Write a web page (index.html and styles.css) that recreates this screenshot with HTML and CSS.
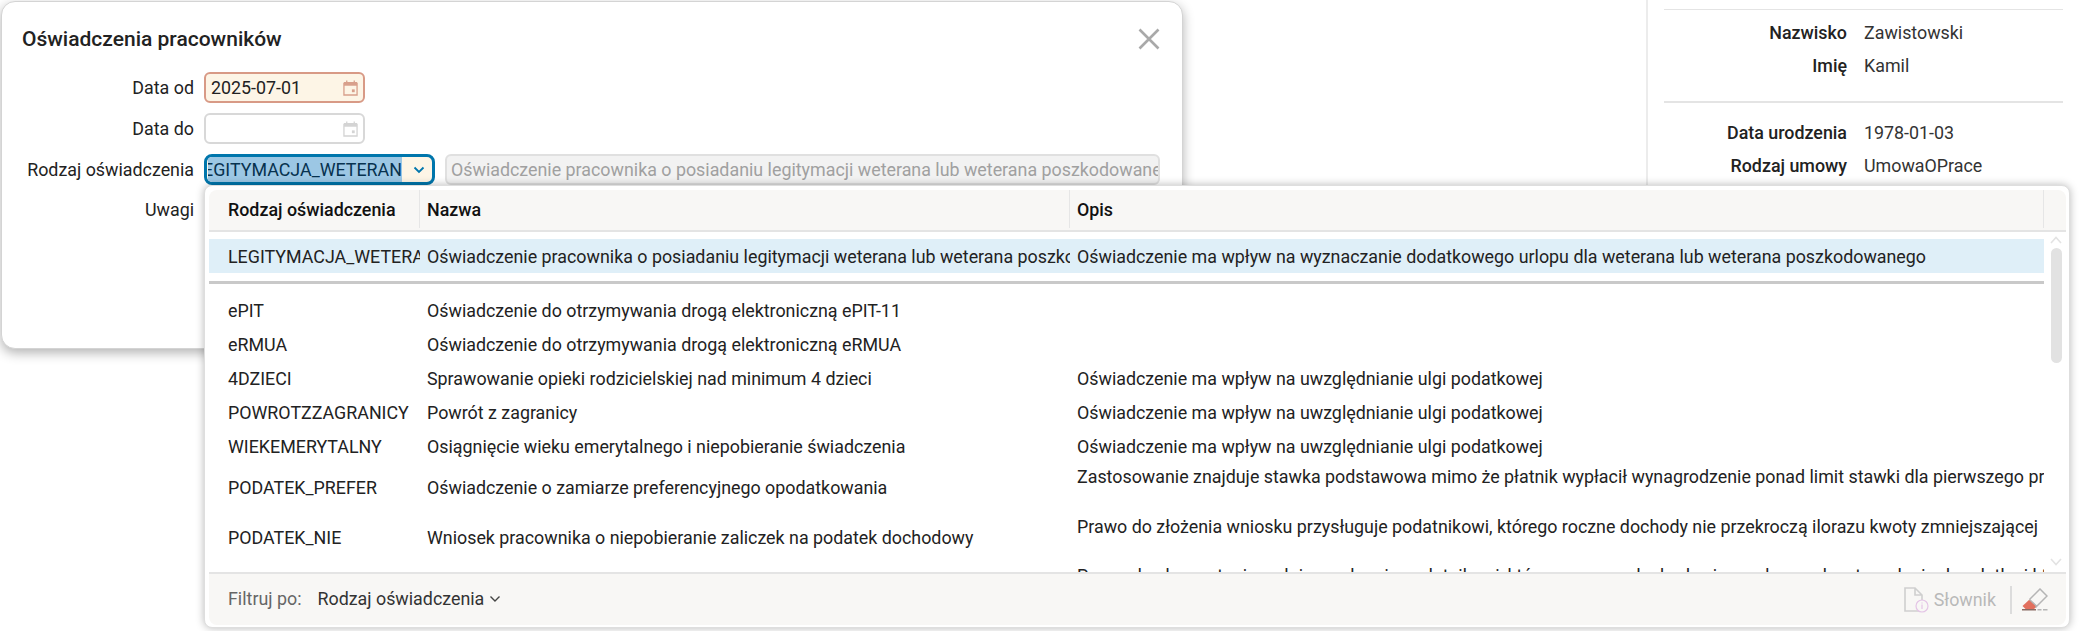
FILE: index.html
```html
<!DOCTYPE html>
<html lang="pl">
<head>
<meta charset="utf-8">
<title>Oświadczenia pracowników</title>
<link rel="stylesheet" href="styles.css">
</head>
<body>
<div class="page">
  <aside class="side">
    <hr class="rule thin">
    <dl class="facts first">
      <dt>Nazwisko</dt><dd>Zawistowski</dd>
      <dt>Imię</dt><dd>Kamil</dd>
    </dl>
    <hr class="rule thick">
    <dl class="facts second">
      <dt>Data urodzenia</dt><dd>1978-01-03</dd>
      <dt>Rodzaj umowy</dt><dd>UmowaOPrace</dd>
    </dl>
  </aside>

  <section class="modal">
    <header class="modal-head">
      <h1>Oświadczenia pracowników</h1>
      <svg class="close" viewBox="0 0 22 22" width="22" height="22"><path d="M1.500 1.500 20.500 20.500M20.500 1.500 1.500 20.500"/></svg>
    </header>
    <div class="form">
      <label>Data od</label>
      <div class="field date required">
        <span>2025-07-01</span>
        <svg viewBox="0 0 16 18" width="15" height="17"><path class="cal" d="M1 4.500h14v12.500H1zM4 1.500v3M12 1.500v3"/><path class="calfill" d="M1 3h14v4H1z"/><rect class="calfill" x="9.500" y="11" width="3" height="3"/></svg>
      </div>
      <label>Data do</label>
      <div class="field date empty">
        <span></span>
        <svg viewBox="0 0 16 18" width="15" height="17"><path class="cal" d="M1 4.500h14v12.500H1zM4 1.500v3M12 1.500v3"/><path class="calfill" d="M1 3h14v4H1z"/><rect class="calfill" x="9.500" y="11" width="3" height="3"/></svg>
      </div>
      <label>Rodzaj oświadczenia</label>
      <div class="kind">
        <div class="field combo">
          <div class="combo-text"><span class="selected">LEGITYMACJA_WETERAN</span></div>
          <svg viewBox="0 0 12 8" width="12" height="8"><path d="M1.500 1.500 6 6l4.500-4.500"/></svg>
        </div>
        <div class="field readonly"><span>Oświadczenie pracownika o posiadaniu legitymacji weterana lub weterana poszkodowanego</span></div>
      </div>
      <label class="notes">Uwagi</label>
    </div>
  </section>

  <section class="dropdown">
    <div class="thead">
      <div class="c1">Rodzaj oświadczenia</div>
      <div class="c2">Nazwa</div>
      <div class="c3">Opis</div>
      <div class="c4"></div>
    </div>
    <div class="tbody">
      <div class="list">
        <div class="row current"><div class="c1">LEGITYMACJA_WETERANA</div><div class="c2">Oświadczenie pracownika o posiadaniu legitymacji weterana lub weterana poszkodowanego</div><div class="c3">Oświadczenie ma wpływ na wyznaczanie dodatkowego urlopu dla weterana lub weterana poszkodowanego</div></div>
        <div class="bar"></div>
        <div class="row"><div class="c1">ePIT</div><div class="c2">Oświadczenie do otrzymywania drogą elektroniczną ePIT-11</div><div class="c3"></div></div>
        <div class="row"><div class="c1">eRMUA</div><div class="c2">Oświadczenie do otrzymywania drogą elektroniczną eRMUA</div><div class="c3"></div></div>
        <div class="row"><div class="c1">4DZIECI</div><div class="c2">Sprawowanie opieki rodzicielskiej nad minimum 4 dzieci</div><div class="c3">Oświadczenie ma wpływ na uwzględnianie ulgi podatkowej</div></div>
        <div class="row"><div class="c1">POWROTZZAGRANICY</div><div class="c2">Powrót z zagranicy</div><div class="c3">Oświadczenie ma wpływ na uwzględnianie ulgi podatkowej</div></div>
        <div class="row"><div class="c1">WIEKEMERYTALNY</div><div class="c2">Osiągnięcie wieku emerytalnego i niepobieranie świadczenia</div><div class="c3">Oświadczenie ma wpływ na uwzględnianie ulgi podatkowej</div></div>
        <div class="row tall"><div class="c1">PODATEK_PREFER</div><div class="c2">Oświadczenie o zamiarze preferencyjnego opodatkowania</div><div class="c3">Zastosowanie znajduje stawka podstawowa mimo że płatnik wypłacił wynagrodzenie ponad limit stawki dla pierwszego progu</div></div>
        <div class="row tall"><div class="c1">PODATEK_NIE</div><div class="c2">Wniosek pracownika o niepobieranie zaliczek na podatek dochodowy</div><div class="c3">Prawo do złożenia wniosku przysługuje podatnikowi, którego roczne dochody nie przekroczą ilorazu kwoty zmniejszającej</div></div>
        <div class="row tall"><div class="c1"></div><div class="c2"></div><div class="c3">Prawo do skorzystania z ulgi przysługuje podatnikowi, którego roczne dochody nie przekroczą kwoty wolnej od podatku i który</div></div>
      </div>
      <div class="scroll">
        <svg viewBox="0 0 12 8" width="12" height="8"><path d="M1 7 6 1.500 11 7"/></svg>
        <div class="thumb"></div>
        <svg class="down" viewBox="0 0 12 8" width="12" height="8"><path d="M1 1 6 6.500 11 1"/></svg>
      </div>
    </div>
    <footer class="tfoot">
      <span class="filter-label">Filtruj po:</span>
      <span class="filter-value">Rodzaj oświadczenia</span>
      <svg class="filter-chev" viewBox="0 0 12 8" width="12" height="8"><path d="M1.500 1.500 6 6l4.500-4.500"/></svg>
      <div class="tools">
        <svg class="doc" viewBox="0 0 26 26" width="26" height="26">
          <path class="doc-page" d="M1 1h10l7 7v16H1zM11 1v7h7"/>
          <circle class="doc-info" cx="18" cy="19" r="6"/>
          <path class="doc-info" d="M18 17.500V22M18 15.500v1"/>
        </svg>
        <span class="dict">Słownik</span>
        <span class="sep"></span>
        <svg class="eraser" viewBox="0 0 27 23" width="27" height="23">
          <path class="er-tip" d="M8.500 11.500 16 18.500 13 21H4.500L1.500 18z"/>
          <path class="er-body" d="M8.500 11.500 19 1 26 8 14.500 19.500M8.500 11.500 16 18.500"/>
          <path class="er-line" d="M1 21.750H15"/>
          <path class="er-dash" d="M16.500 21.750h4M22 21.750h4.500"/>
        </svg>
      </div>
    </footer>
  </section>
</div>
</body>
</html>
```
FILE: styles.css
```css
* { box-sizing: border-box; }
html, body { margin: 0; padding: 0; background: #fff; }
body {
  width: 2079px;
  height: 631px;
  overflow: hidden;
  font-family: Roboto, "Liberation Sans", sans-serif;
  font-size: 17.850px;
  color: #222;
}
.page {
  position: relative;
  width: 2079px;
  height: 631px;
  display: flex;
  justify-content: flex-end;
}

/* background panel */
.side {
  width: 433px;
  height: 186px;
  border-left: 2px solid #ececec;
  padding: 9px 16px 0 16px;
  overflow: hidden;
}
.rule { border: 0; margin: 0; background: #e4e4e4; }
.rule.thin { height: 1px; }
.rule.thick { height: 2px; }
.facts {
  display: grid;
  grid-template-columns: 183px 1fr;
  column-gap: 17px;
  grid-auto-rows: 33px;
  align-items: center;
  margin: 0;
}
.facts.first { padding: 6px 0 19px; }
.facts.second { padding: 13px 0 0; }
.facts dt { text-align: right; font-weight: 500; }
.facts dd { margin: 0; color: #333; }

/* modal */
.modal {
  position: absolute;
  left: 1px;
  top: 1px;
  width: 1182px;
  height: 348px;
  background: #fff;
  border: 1px solid #d4d4d4;
  border-radius: 14px;
  box-shadow: 0 4px 12px rgba(0, 0, 0, .3);
  padding: 0 20px;
}
.modal-head {
  display: flex;
  align-items: center;
  justify-content: space-between;
  height: 70px;
  padding: 4px 2px 0 0;
}
.modal-head h1 { margin: 0; font-size: 21px; font-weight: 500; color: #222; }
.close path { fill: none; stroke: #a9a9a9; stroke-width: 2.600; }
.form {
  display: grid;
  grid-template-columns: 172px minmax(0, 1fr);
  column-gap: 10px;
  row-gap: 10px;
  grid-auto-rows: 31px;
  align-items: center;
}
.form label { text-align: right; }
.form label.notes { align-self: start; padding-top: 4px; }
.field {
  height: 31px;
  display: flex;
  align-items: center;
  border: 2px solid #d8d8d8;
  border-radius: 6px;
  background: #fff;
  overflow: hidden;
}
.date { width: 161px; justify-content: space-between; padding: 0 5px 0 5px; }
.date svg { flex: none; }
.cal { fill: none; stroke-width: 1.400; }
.required { background: #fdf5e6; border-color: #d89a86; }
.required .cal { stroke: #d8a08c; }
.required .calfill { fill: #d8a08c; }
.empty .cal { stroke: #d4d4d4; }
.empty .calfill { fill: #d4d4d4; }
.kind { display: flex; align-items: center; column-gap: 10px; margin-right: 2px; }
.combo {
  flex: none;
  width: 231px;
  border: 3px solid #0076ac;
  border-radius: 8px;
  background: #fdf5e6;
  padding: 0 7px 0 1px;
}
.combo-text {
  width: 196px;
  display: flex;
  justify-content: flex-end;
  overflow: hidden;
  white-space: nowrap;
}
.selected { flex: none; background: #9cc7e4; color: #07324f; line-height: 25px; }
.combo svg { margin-left: 11px; flex: none; }
.combo path { fill: none; stroke: #0076ac; stroke-width: 1.800; }
.readonly {
  flex: 1;
  min-width: 0;
  background: #f2f2f2;
  border-color: #e0e0e0;
  color: #a0a0a0;
  padding: 0 0 0 4px;
  white-space: nowrap;
}

/* dropdown menu */
.dropdown {
  position: absolute;
  left: 204px;
  top: 185px;
  width: 1866px;
  height: 443px;
  background: #fff;
  border: 1px solid #dedede;
  border-radius: 8px;
  box-shadow: 0 0 9px rgba(0, 0, 0, .28);
  padding: 4px 3px 2px 4px;
  display: flex;
  flex-direction: column;
  overflow: hidden;
}
.thead {
  flex: none;
  height: 42px;
  display: flex;
  background: #f8f7f5;
  border-bottom: 2px solid #e4e4e4;
  border-radius: 8px 8px 0 0;
  font-weight: 500;
  color: #111;
  padding-bottom: 2px;
}
.thead > div {
  display: flex;
  align-items: center;
  border-right: 1px solid #e6e6e6;
}
.c1, .c2, .c3 { flex: none; white-space: nowrap; overflow: hidden; }
.c1 { width: 211px; padding-left: 19px; }
.c2 { width: 650px; padding-left: 7px; }
.c3 { width: 974px; padding-left: 7px; }
.thead .c4 { flex: 1; border-right: 0; }
.tbody {
  flex: 1;
  min-height: 0;
  display: flex;
  overflow: hidden;
}
.list { flex: none; width: 1835px; padding-top: 7px; overflow: hidden; }
.row {
  display: flex;
  align-items: center;
  height: 34px;
}
.row.tall { height: 49.500px; }
.row.tall .c3 { align-self: flex-start; line-height: 20px; padding-top: 4px; }
.row.current { background: #dfeff8; }
.bar { height: 3px; margin: 8px 0 9px; background: #c9c9c9; }
.scroll {
  flex: 1;
  display: flex;
  flex-direction: column;
  align-items: center;
  padding: 4px 5px 0 6px;
}
.scroll svg { flex: none; }
.scroll path { fill: none; stroke: #e3e3e3; stroke-width: 1.600; }
.thumb {
  width: 11px;
  height: 115px;
  margin-top: 4px;
  background: #e2e2e2;
  border-radius: 5.500px;
}
.scroll .down { margin-top: auto; margin-bottom: 6px; }
.tfoot {
  flex: none;
  height: 53px;
  display: flex;
  align-items: center;
  background: #f8f7f5;
  border-top: 2px solid #e4e4e4;
  border-radius: 0 0 8px 8px;
  padding: 0 18px 2px 19px;
}
.filter-label { color: #666; }
.filter-value { margin-left: 16px; color: #333; }
.filter-chev { margin-left: 5px; }
.filter-chev path { fill: none; stroke: #444; stroke-width: 1.400; }
.tools { margin-left: auto; display: flex; align-items: center; padding-top: 2px; }
.doc-page { fill: none; stroke: #cfcfcf; stroke-width: 1.600; }
.doc-info { fill: #f8f7f5; stroke: #e4c4e6; stroke-width: 1.200; }
.dict { margin-left: 4px; color: #b9b9b9; }
.sep { width: 2px; height: 28px; margin: 0 9px 0 14px; background: #dcdcdc; }
.er-body { fill: none; stroke: #b5b5b5; stroke-width: 1.500; }
.er-tip { fill: #e2705e; }
.er-line { stroke: #8a6a62; stroke-width: 1.500; }
.er-dash { stroke: #b5b5b5; stroke-width: 1.500; }
```
